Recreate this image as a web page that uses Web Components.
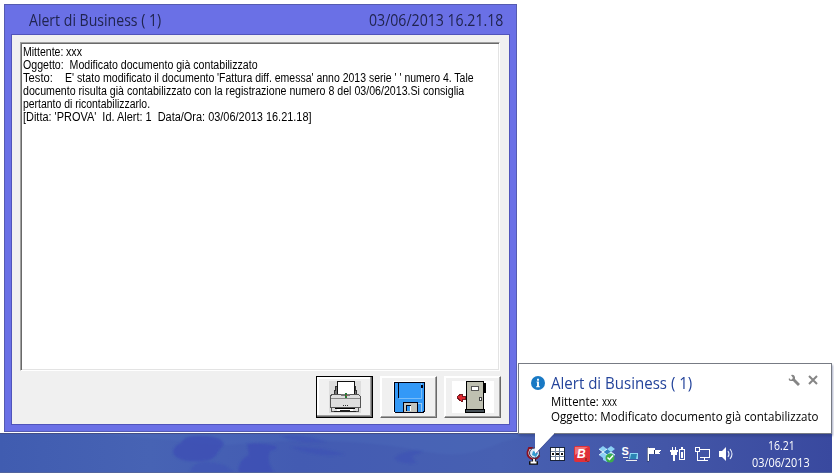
<!DOCTYPE html>
<html lang="it"><head><meta charset="utf-8"><title>Alert di Business</title>
<style>html,body{margin:0;background:#fff;overflow:hidden}</style></head><body>
<desktop-screen></desktop-screen>
<script>
const define=(name,html,after)=>customElements.define(name,class extends HTMLElement{
  constructor(){super();const t=document.createElement('template');t.innerHTML=html;this.attachShadow({mode:'open'}).append(t.content.cloneNode(true));}
  connectedCallback(){if(after)after(this);}
});

/* One line of text condensed horizontally to the width given in "w". */
define('text-run',`<style>:host{display:block;white-space:pre;overflow:visible}span{display:inline-block;transform-origin:0 50%}</style><span></span>`,el=>{
  const s=el.shadowRoot.querySelector('span');s.textContent=el.getAttribute('text');
  const w=+el.getAttribute('w');el.style.width=w+'px';
  requestAnimationFrame(()=>{s.style.transform='scaleX('+w/s.offsetWidth+')';});
  s.style.transform='scaleX('+w/s.offsetWidth+')';
});

define('tool-button',`<style>
:host{display:block;box-sizing:border-box;width:57px;height:42px;background:#f0f0f0;border:1px solid;border-color:#fff #696969 #696969 #fff;box-shadow:inset -1px -1px #a0a0a0,inset 1px 1px #fff}
:host([focused]){border-color:#000;box-shadow:inset -1px -1px #696969,inset -2px -2px #a0a0a0,inset 1px 1px #fff,inset 2px 2px #fff}
div{width:100%;height:100%;display:grid;place-items:center}::slotted(svg){display:block}
</style><div><slot></slot></div>`);

define('alert-window',`<style>
:host{display:flex;flex-direction:column;box-sizing:border-box;width:513px;height:428px;background:#6a70e6;border:1px solid #555bb0;padding:0 6px 6px;font-family:"Liberation Sans",sans-serif}
header{flex:none;height:29px;display:flex;justify-content:space-between;align-items:center;padding:0 7px 0 18px;font:16px/20px "Open Sans",sans-serif;color:#20244f}
main{flex:1;min-height:0;display:flex;flex-direction:column;box-sizing:border-box;background:#f0f0f0;border:1px solid #5054ba;padding:7px 15px 6px 8px}
.memo{flex:none;box-sizing:border-box;width:480px;height:329px;background:#fff;border:1px solid;border-color:#a0a0a0 #fff #fff #a0a0a0;box-shadow:inset 1px 1px #696969,inset -1px -1px #e3e3e3;padding:3px 2px;font-size:12px;line-height:13px;color:#000}
.row{display:flex}
.buttons{display:flex;gap:7px;justify-content:flex-end;margin-top:5px;margin-right:-7px}
</style>
<header><text-run w="132" text="Alert di Business ( 1)"></text-run><text-run w="134" text="03/06/2013 16.21.18"></text-run></header>
<main><div class="memo">
<div class="row"><text-run w="43" text="Mittente: "></text-run><text-run w="16" text="xxx"></text-run></div>
<text-run w="235" text="Oggetto:  Modificato documento già contabilizzato"></text-run>
<div class="row"><text-run w="42" text="Testo:    "></text-run><text-run w="152" text="E' stato modificato il documento "></text-run><text-run w="257" text="'Fattura diff. emessa' anno 2013 serie ' ' numero 4. Tale"></text-run></div>
<text-run w="441" text="documento risulta già contabilizzato con la registrazione numero 8 del 03/06/2013.Si consiglia"></text-run>
<text-run w="127" text="pertanto di ricontabilizzarlo."></text-run>
<text-run w="289" text="[Ditta: 'PROVA'  Id. Alert: 1  Data/Ora: 03/06/2013 16.21.18]"></text-run>
</div>
<div class="buttons">
<tool-button focused><svg width="32" height="32" viewBox="0 0 32 32" shape-rendering="crispEdges"><path fill="#ddd" d="M0 0h32v32H0z"/><path d="M6 5h3v8H5v-4h1zM26 5h-3v8h4v-4h-1z" fill="#777" stroke="#333"/><path d="M8.500 .5h17v13h-17z" fill="#fff" stroke="#111"/><path d="M2.500 13.500h27l2 2v11h-30v-11z" fill="#dedede" stroke="#555"/><path d="M2 17h29" stroke="#888"/><path d="M12 13h9v2h-9z" fill="#777"/><path d="M16 12h2v5h-2z" fill="#287a37"/><path d="M17 14h1v1h-1z" fill="#c33"/><path d="M14 24h1v1h-1zM16 24h1v1h-1zM18 24h1v1h-1z" fill="#333"/><path d="M6 27h20v1H6z" fill="#000"/><path d="M2.500 27v3.500h27V27" fill="none" stroke="#555"/><path d="M8 28h16v2H8z" fill="#fff"/><path d="M5 30h5l2-1h8l2 1h5v1H5z" fill="#222"/></svg></tool-button>
<tool-button><svg width="32" height="32" viewBox="0 0 32 32" shape-rendering="crispEdges"><path fill="#fff" d="M0 0h32v32H0z"/><path d="M1.500 1.500h30v29h-1v1h-28l-1-1z" fill="#3399f7" stroke="#001"/><path d="M5.500 2v15" stroke="#001"/><path d="M6 17.500h22V2" fill="none" stroke="#79bdf8"/><path d="M28 4h2v3h-2z" fill="#001"/><path d="M24 22.500h4v8" fill="none" stroke="#9dc7eb"/><path d="M10.500 21.500h14v10h-14z" fill="#c5c5bd" stroke="#001"/><path d="M13 24h5v6h-5z" fill="#001"/><path d="M14 25h3v5h-3z" fill="#3399f7"/><path d="M17 25h1v5h-1z" fill="#fff"/></svg></tool-button>
<tool-button><svg width="42" height="34" viewBox="0 0 42 34" shape-rendering="crispEdges"><path fill="#fff" d="M0 1h42v32H0z"/><path d="M14.500 1.500h17v28h-17z" fill="#bfc0b1" stroke="#000"/><path d="M31.500 1v28M32 3h1v9h-1z" stroke="#000"/><path d="M13.500 29.500h19v3h-19z" fill="#465057" stroke="#000"/><path d="M19.500 6.500h7v4h-7z" fill="#fff" stroke="#555"/><path d="M27.500 17.500h2v3h-2z" fill="#fff" stroke="#444"/><path d="M5 17l4-3h1v2h3v3h-3v2H9l-4-3z" fill="#df2730" stroke="#771c22"/></svg></tool-button>
</div></main>`);

define('tray-icons',`<style>:host{display:block}svg{display:block}text{font-family:"Liberation Sans",sans-serif}</style>
<svg width="214" height="24" viewBox="0 0 214 24">
<g><path d="M3 2h3l7 8q-3 4-7 3Q1 11 1.500 6z" fill="#eee" stroke="#8a1022" stroke-width="1.800"/><circle cx="8.500" cy="7" r="5" fill="#dce8f6" stroke="#335"/><path d="M7 5l5 2-2 4-4-2z" fill="#329bd1"/><path d="M10 4l2 2-2 1z" fill="#a04dc7"/><path d="M8 13v3M3 17h9" stroke="#111" stroke-width="3.600"/><path d="M8 13v3M4.500 16.500h6" stroke="#fff" stroke-width="1.800"/></g>
<g shape-rendering="crispEdges"><path d="M24 1h15v14H24z" fill="#192339"/><path d="M25 2h13v12H25z" fill="#fff"/><path d="M29.500 2v12M33.500 2v12M25 5.500h13M25 10.500h13" stroke="#71829c"/><path d="M26 7h2v2h-2zM30 7h3v2h-3zM35 7h2v2h-2z" fill="#111"/></g>
<g><rect x="48" y="0" width="16" height="16" rx="2" fill="#df3039"/><path d="M49 1h13L49 9z" fill="#ee7377"/><text x="51" y="12" font-size="12" font-weight="bold" font-style="italic" fill="#fff">B</text><path d="M60 12v3M62 15v1" stroke="#621"/></g>
<g transform="translate(0 -1)"><path d="M73 4l4-3 4 3 4-3 4 3-4 3 4 3-4 3v2l-4 2-4-2v-2l-4-3 4-3z" fill="#8bd0f5"/><path d="M77 7l4-3 4 3-4 3z" fill="#3481c2"/><path d="M73 4l4 3 4-3M73 10l4-3 4 3 4-3 4 3" fill="none" stroke="#dff5ff"/><circle cx="84" cy="13" r="4.500" fill="#3cac4b"/><path d="M81.500 12.500l2 2 3.500-4" fill="none" stroke="#fff" stroke-width="1.500"/></g>
<g><text x="95.500" y="9" font-size="11" font-weight="bold" fill="#fff">S</text><path d="M104 7h8v6h-9z" fill="#8fd8f4"/><path d="M105 8h6l-1 5h-6z" fill="#2b84b4"/><path d="M97 11h5v1h-5zM100 14h11v1h-11z" fill="#eee"/></g>
<g shape-rendering="crispEdges"><path d="M121 1h2v14h-2z" fill="#fff" stroke="#26345f" stroke-width=".6"/><path d="M123 2h6v2h6l-2 3 1 1h-6V8h-5z" fill="#fff"/><path d="M128.500 4v4" stroke="#26345f"/></g>
<g transform="translate(0 -1)" shape-rendering="crispEdges"><path d="M146.500 2v4M149.500 2v4" stroke="#fff"/><path d="M144 5h8v2h-1v3h-2v6h-2v-6h-2V7h-1z" fill="#fff"/><path d="M153.500 4.500h5v10h-5z" fill="#4259a8" stroke="#fff" stroke-width="1.500"/><path d="M155 2h2v2h-2z" fill="#fff"/><path d="M155 7h2v6h-2z" fill="#fff"/></g>
<g transform="translate(-1 -1)" shape-rendering="crispEdges" fill="none" stroke="#fff"><path d="M175 4.500h9.500v8H175" stroke-width="1.200"/><path d="M176 15.500h7M179.500 12v4"/><path d="M170.500 2.500h4v4h-4zM172.500 7v8.500h4" stroke-width="1.200"/></g>
<g transform="translate(0 -1)"><path d="M193 6h3l4-4v14l-4-4h-3z" fill="#fff"/><path d="M202 6q2 3 0 6M204 4q4 5 0 10" fill="none" stroke="#e9eefb" stroke-width="1.100"/></g>
</svg>`);

define('task-bar',`<style>
:host{display:grid;grid-template-columns:1fr 214px 92px;box-sizing:border-box;width:832px;height:40px;position:relative;background:linear-gradient(90deg,#405cb0,#4763b4 18%,#435bb2 36%,#4760b2 60%,#4356a7 80%,#39499f);border-top:1px solid #434f87;border-bottom:1px solid #51649e;overflow:hidden}
.art{position:absolute;inset:0}tray-icons{grid-column:2;margin-top:12px;position:relative}
.clock{position:relative;display:flex;flex-direction:column;align-items:center;padding-top:3px;padding-right:10px;color:#fff;font:12px/17px "Open Sans",sans-serif}
</style>
<svg class="art" width="832" height="39"><defs><filter id="b"><feGaussianBlur stdDeviation=".8"/></filter></defs><path d="M100 0h432l-30 8q-35 18-75 10-88-18-200-7z" fill="#5070bd" opacity=".3" filter="url(#b)"/><g fill="#3c4eb5" opacity=".75" filter="url(#b)"><path d="M173 19q0-7 8-10 3-8 18-7 22-1 25 8l-6 8q-4 9-16 9-24 2-29-8z"/><path d="M189 39q4-11 15-11 20-1 31 11z" opacity=".6"/><path d="M247 10q14-2 29 2 3 3-6 5-4 10 4 22h-36q0-13 11-18z"/><path d="M280 2q26-3 46 6-29 2-46-6zM290 13q27-1 55 7-23 5-55-7zM394 24q11-9 29-7-5 3-11 5 1 4 5 7-16 2-23-5z" opacity=".7"/></g></svg>
<tray-icons></tray-icons><div class="clock"><text-run w="27" text="16.21"></text-run><text-run w="58" text="03/06/2013"></text-run></div>`);

define('tray-balloon',`<style>
:host{display:block;box-sizing:border-box;width:314px;height:71px;background:#fff;border:1px solid #777b84;padding:9px 12px 0 12px;box-shadow:1px 2px 2px #26346f66;font:12px/15px "Open Sans",sans-serif;color:#000}
.head{display:flex;align-items:center;height:20px}.head text-run{margin-left:5px;font-size:16px;line-height:20px;color:#24449b}
.acts{display:flex;margin-left:auto;gap:8px;margin-top:-7px;margin-right:1px}.body{padding:1px 0 0 20px}.row{display:flex}
.tail{position:absolute;left:14px;top:68px}
</style><div class="head"><svg width="14" height="14" viewBox="0 0 15 15"><circle cx="7.500" cy="7.500" r="7.500" fill="#1979c4"/><path d="M6.500 3h2v2h-2zM6 6h2.500v5h1v1H5.500v-1h1V7H6z" fill="#fff"/></svg><text-run style="margin-left:6px" w="141" text="Alert di Business ( 1)"></text-run>
<div class="acts"><svg width="12" height="12" viewBox="0 0 12 12"><path d="M1 4l2 2 2-2-2-3q3-1 4 2v2l5 5-2 2-5-5H3Q0 7 1 4z" fill="#858585"/></svg><svg width="10" height="12" viewBox="0 0 10 12"><path d="M1 2l8 8M9 2L1 10" stroke="#858585" stroke-width="2"/></svg></div></div>
<div class="body"><div class="row"><text-run w="51" text="Mittente: "></text-run><text-run w="15" text="xxx"></text-run></div><text-run w="268" text="Oggetto: Modificato documento già contabilizzato"></text-run></div>
<svg class="tail" width="28" height="26"><path d="M2 0v22L21 2V0z" fill="#fff"/><path d="M2.500 22L21 2.500" stroke="#3a4681" stroke-opacity=".5"/></svg>`);

define('desktop-screen',`<style>:host{display:block;position:relative;width:834px;height:476px;background:#fff}
alert-window{position:absolute;left:4px;top:4px}task-bar{position:absolute;left:0;top:433px}tray-balloon{position:absolute;left:518px;top:363px}
</style><alert-window></alert-window><task-bar></task-bar><tray-balloon></tray-balloon>`);
</script></body></html>
